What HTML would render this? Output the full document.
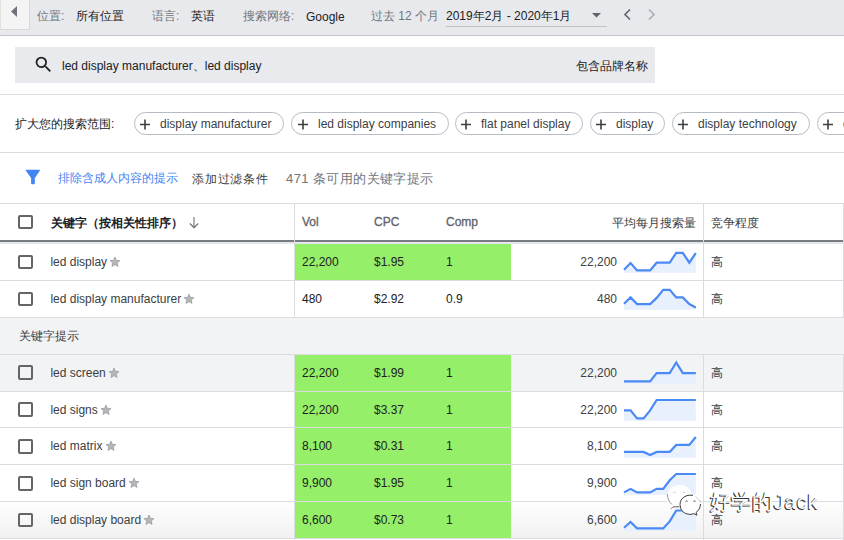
<!DOCTYPE html>
<html><head><meta charset="utf-8">
<style>
*{box-sizing:border-box;margin:0;padding:0}
html,body{width:844px;height:540px;overflow:hidden;background:#fff}
body{position:relative;font-family:"Liberation Sans",sans-serif;font-size:12px;color:#3c4043}
.a{position:absolute;white-space:nowrap}
.t{position:absolute;white-space:nowrap;line-height:14px}
.topbar{left:0;top:0;width:844px;height:35px;background:#e8e9ed;border-bottom:1px solid #c4c5c8;height:36px}
.backbtn{left:0;top:0;width:30px;height:30px;background:#f4f4f5;border-right:1px solid #d9d9db;border-bottom:1px solid #d9d9db;border-left:1px solid #e0e0e0}
.lbl{color:#70757a}
.val{color:#202124}
.search{left:15px;top:47px;width:640px;height:36px;background:#e8eaed}
.hline{position:absolute;left:0;width:844px;height:1px;background:#dadce0}
.chip{position:absolute;top:112px;height:23px;border:1px solid #b7bcc4;border-radius:12px;background:#fff}
.chip .pl{position:absolute;left:5px;top:5.5px}
.chip .pl:before{content:"";position:absolute;left:0;top:4.25px;width:10px;height:1.5px;background:#3c4043}
.chip .pl:after{content:"";position:absolute;left:4.25px;top:0;width:1.5px;height:10px;background:#3c4043}
.chip span{position:absolute;top:4px;line-height:14px;color:#3c4043}
.cb{position:absolute;left:18px;width:15px;height:14px;border:2px solid #646566;border-radius:2px}
.row{position:absolute;left:0;width:844px}
.green{position:absolute;left:295px;width:216px;background:#95ef68}
.st{position:relative;top:1.5px;margin-left:2.2px}
</style></head><body>

<!-- top bar -->
<div class="a topbar"></div>
<div class="a backbtn"><svg width="30" height="30" style="position:absolute;left:-1px;top:0"><path d="M17 6 L11 11.5 L17 17 Z" fill="#70747a"/></svg></div>
<div class="t lbl" style="left:37px;top:9px">位置:</div>
<div class="t val" style="left:76px;top:9px">所有位置</div>
<div class="t lbl" style="left:152px;top:9px">语言:</div>
<div class="t val" style="left:191px;top:9px">英语</div>
<div class="t lbl" style="left:243px;top:9px">搜索网络:</div>
<div class="t val" style="left:306px;top:10px">Google</div>
<div class="t lbl" style="left:371px;top:9px">过去 12 个月</div>
<div class="t val" style="left:446px;top:9px">2019年2月 - 2020年1月</div>
<div class="a" style="left:446px;top:26px;width:161px;height:1px;background:#c0c2c6"></div>
<svg class="a" style="left:590px;top:12px" width="14" height="8"><path d="M2 1 L11 1 L6.5 5.5 Z" fill="#5f6368"/></svg>
<svg class="a" style="left:620px;top:6px" width="14" height="16"><path d="M10 3.5 L5 8.5 L10 13.5" fill="none" stroke="#5f6368" stroke-width="1.6"/></svg>
<svg class="a" style="left:644px;top:6px" width="14" height="16"><path d="M5 3.5 L10 8.5 L5 13.5" fill="none" stroke="#a9acb1" stroke-width="1.6"/></svg>

<!-- search -->
<div class="a search"></div>
<svg class="a" style="left:33px;top:53.5px" width="21" height="21" viewBox="0 0 24 24"><path fill="#202124" d="M15.5 14h-.79l-.28-.27A6.471 6.471 0 0 0 16 9.5 6.5 6.5 0 1 0 9.5 16c1.61 0 3.09-.59 4.23-1.57l.27.28v.79l5 4.99L20.49 19l-4.99-5zm-6 0C7.01 14 5 11.99 5 9.5S7.01 5 9.5 5 14 7.01 14 9.5 11.99 14 9.5 14z"/></svg>
<div class="t val" style="left:62px;top:59px;color:#202124">led display manufacturer、led display</div>
<div class="t val" style="left:576px;top:59px;color:#202124">包含品牌名称</div>
<div class="hline" style="top:94px"></div>

<!-- chips -->
<div class="t val" style="left:15px;top:117px;color:#202124">扩大您的搜索范围:</div>
<div class="chip" style="left:134px;width:150px"><svg class="pl" width="12" height="12"><path d="M0 5.5 H10 M5 0.5 V10.5" stroke="#3c4043" stroke-width="1.6" fill="none"/></svg><span style="left:25px">display manufacturer</span></div>
<div class="chip" style="left:291px;width:158px"><svg class="pl" width="12" height="12" style="left:6px"><path d="M0 5.5 H10 M5 0.5 V10.5" stroke="#3c4043" stroke-width="1.6" fill="none"/></svg><span style="left:26px">led display companies</span></div>
<div class="chip" style="left:455px;width:128px"><svg class="pl" width="12" height="12"><path d="M0 5.5 H10 M5 0.5 V10.5" stroke="#3c4043" stroke-width="1.6" fill="none"/></svg><span style="left:25px">flat panel display</span></div>
<div class="chip" style="left:590px;width:75px"><svg class="pl" width="12" height="12"><path d="M0 5.5 H10 M5 0.5 V10.5" stroke="#3c4043" stroke-width="1.6" fill="none"/></svg><span style="left:25px">display</span></div>
<div class="chip" style="left:672px;width:138px"><svg class="pl" width="12" height="12"><path d="M0 5.5 H10 M5 0.5 V10.5" stroke="#3c4043" stroke-width="1.6" fill="none"/></svg><span style="left:25px">display technology</span></div>
<div class="chip" style="left:817px;width:60px"><svg class="pl" width="12" height="12"><path d="M0 5.5 H10 M5 0.5 V10.5" stroke="#3c4043" stroke-width="1.6" fill="none"/></svg><span style="left:25px">display</span></div>
<div class="hline" style="top:152px"></div>

<!-- filter row -->
<svg class="a" style="left:20px;top:165px" width="26" height="25" viewBox="20 165 26 25"><path d="M26.3 169.8 H39.4 Q40.3 169.8 39.8 170.7 L34.8 178 V183.6 Q34.8 184.3 34.1 184.3 H31.8 Q31.1 184.3 31.1 183.6 V178 L25.9 170.7 Q25.4 169.8 26.3 169.8 Z" fill="#4285f4"/></svg>
<div class="t" style="left:58px;top:171px;color:#4285f4">排除含成人内容的提示</div>
<div class="t" style="left:192px;top:172px;color:#3c4043;font-size:12px;letter-spacing:0.8px">添加过滤条件</div>
<div class="t" style="left:286px;top:172px;color:#70757a;font-size:13px;letter-spacing:0.4px">471 条可用的关键字提示</div>
<div class="hline" style="top:203px"></div>

<!-- table -->
<div class="a" style="left:0;top:318px;width:844px;height:36px;background:#f1f3f4"></div>
<div class="a" style="left:0;top:355px;width:844px;height:36px;background:#f1f3f4"></div>
<div class="a" style="left:0;top:502px;width:844px;height:36px;background:linear-gradient(#fefefe,#f1f1f1)"></div>
<div class="green" style="top:244px;height:36px"></div>
<div class="green" style="top:355px;height:183px"></div>
<div class="hline" style="top:280px"></div>
<div class="hline" style="top:317px"></div>
<div class="hline" style="top:354px"></div>
<div class="hline" style="top:391px"></div>
<div class="hline" style="top:427px"></div>
<div class="hline" style="top:464px"></div>
<div class="hline" style="top:501px"></div>
<div class="hline" style="top:538px"></div>
<div class="a" style="left:0;top:240px;width:844px;height:2px;background:#777c84"></div>
<div class="a" style="left:0;top:242px;width:844px;height:2px;background:#e6e6ec"></div>
<div class="a" style="left:294px;top:204px;width:1px;height:114px;background:#dadce0"></div>
<div class="a" style="left:294px;top:355px;width:1px;height:185px;background:#dadce0"></div>
<div class="a" style="left:703px;top:204px;width:1px;height:114px;background:#dadce0"></div>
<div class="a" style="left:703px;top:355px;width:1px;height:185px;background:#dadce0"></div>
<div class="a" style="left:843px;top:204px;width:1px;height:114px;background:#dadce0"></div>
<div class="a" style="left:843px;top:355px;width:1px;height:185px;background:#dadce0"></div>
<div class="cb" style="top:215px"></div>
<div class="t" style="left:51px;top:216px;font-weight:bold;color:#202124">关键字（按相关性排序）</div>
<svg class="a" style="left:188px;top:216px" width="12" height="13"><path d="M6 1 V11.5 M1.8 7.5 L6 11.7 L10.2 7.5" fill="none" stroke="#6f7378" stroke-width="1.1"/></svg>
<div class="t" style="left:302px;top:215px;color:#5f6368;-webkit-text-stroke:0.3px #5f6368">Vol</div>
<div class="t" style="left:374px;top:215px;color:#5f6368;-webkit-text-stroke:0.3px #5f6368">CPC</div>
<div class="t" style="left:446px;top:215px;color:#5f6368;-webkit-text-stroke:0.3px #5f6368">Comp</div>
<div class="t" style="left:596px;top:216px;width:100px;text-align:right;color:#3c4043">平均每月搜索量</div>
<div class="t" style="left:711px;top:216px;color:#3c4043">竞争程度</div>
<div class="t" style="left:18.5px;top:329px;color:#3c4043">关键字提示</div>
<div class="cb" style="top:255px"></div>
<div class="t kw" style="left:50.4px;top:254px">led display<svg class="st" width="12" height="12" viewBox="0 0 24 24"><path d="M12 17.27L18.18 21l-1.64-7.03L22 9.24l-7.19-.61L12 2 9.19 8.63 2 9.24l5.46 4.73L5.82 21z" fill="#b4b6b9" stroke="#8d9096" stroke-width="1.2" stroke-linejoin="round"/></svg></div>
<div class="t" style="left:302px;top:255px;color:#202124">22,200</div>
<div class="t" style="left:374px;top:255px;color:#202124">$1.95</div>
<div class="t" style="left:446px;top:255px;color:#202124">1</div>
<div class="t" style="left:517px;top:255px;width:100px;text-align:right;color:#3c4043">22,200</div>
<div class="t" style="left:711px;top:255px;color:#3c4043">高</div>
<div class="cb" style="top:292px"></div>
<div class="t kw" style="left:50.4px;top:291px">led display manufacturer<svg class="st" width="12" height="12" viewBox="0 0 24 24"><path d="M12 17.27L18.18 21l-1.64-7.03L22 9.24l-7.19-.61L12 2 9.19 8.63 2 9.24l5.46 4.73L5.82 21z" fill="#b4b6b9" stroke="#8d9096" stroke-width="1.2" stroke-linejoin="round"/></svg></div>
<div class="t" style="left:302px;top:292px;color:#202124">480</div>
<div class="t" style="left:374px;top:292px;color:#202124">$2.92</div>
<div class="t" style="left:446px;top:292px;color:#202124">0.9</div>
<div class="t" style="left:517px;top:292px;width:100px;text-align:right;color:#3c4043">480</div>
<div class="t" style="left:711px;top:292px;color:#3c4043">高</div>
<div class="cb" style="top:365px;height:15px"></div>
<div class="t kw" style="left:50.4px;top:365px">led screen<svg class="st" width="12" height="12" viewBox="0 0 24 24"><path d="M12 17.27L18.18 21l-1.64-7.03L22 9.24l-7.19-.61L12 2 9.19 8.63 2 9.24l5.46 4.73L5.82 21z" fill="#b4b6b9" stroke="#8d9096" stroke-width="1.2" stroke-linejoin="round"/></svg></div>
<div class="t" style="left:302px;top:366px;color:#202124">22,200</div>
<div class="t" style="left:374px;top:366px;color:#202124">$1.99</div>
<div class="t" style="left:446px;top:366px;color:#202124">1</div>
<div class="t" style="left:517px;top:366px;width:100px;text-align:right;color:#3c4043">22,200</div>
<div class="t" style="left:711px;top:366px;color:#3c4043">高</div>
<div class="cb" style="top:402px;height:15px"></div>
<div class="t kw" style="left:50.4px;top:402px">led signs<svg class="st" width="12" height="12" viewBox="0 0 24 24"><path d="M12 17.27L18.18 21l-1.64-7.03L22 9.24l-7.19-.61L12 2 9.19 8.63 2 9.24l5.46 4.73L5.82 21z" fill="#b4b6b9" stroke="#8d9096" stroke-width="1.2" stroke-linejoin="round"/></svg></div>
<div class="t" style="left:302px;top:403px;color:#202124">22,200</div>
<div class="t" style="left:374px;top:403px;color:#202124">$3.37</div>
<div class="t" style="left:446px;top:403px;color:#202124">1</div>
<div class="t" style="left:517px;top:403px;width:100px;text-align:right;color:#3c4043">22,200</div>
<div class="t" style="left:711px;top:403px;color:#3c4043">高</div>
<div class="cb" style="top:439px;height:15px"></div>
<div class="t kw" style="left:50.4px;top:438px">led matrix<svg class="st" width="12" height="12" viewBox="0 0 24 24"><path d="M12 17.27L18.18 21l-1.64-7.03L22 9.24l-7.19-.61L12 2 9.19 8.63 2 9.24l5.46 4.73L5.82 21z" fill="#b4b6b9" stroke="#8d9096" stroke-width="1.2" stroke-linejoin="round"/></svg></div>
<div class="t" style="left:302px;top:439px;color:#202124">8,100</div>
<div class="t" style="left:374px;top:439px;color:#202124">$0.31</div>
<div class="t" style="left:446px;top:439px;color:#202124">1</div>
<div class="t" style="left:517px;top:439px;width:100px;text-align:right;color:#3c4043">8,100</div>
<div class="t" style="left:711px;top:439px;color:#3c4043">高</div>
<div class="cb" style="top:476px;height:15px"></div>
<div class="t kw" style="left:50.4px;top:475px">led sign board<svg class="st" width="12" height="12" viewBox="0 0 24 24"><path d="M12 17.27L18.18 21l-1.64-7.03L22 9.24l-7.19-.61L12 2 9.19 8.63 2 9.24l5.46 4.73L5.82 21z" fill="#b4b6b9" stroke="#8d9096" stroke-width="1.2" stroke-linejoin="round"/></svg></div>
<div class="t" style="left:302px;top:476px;color:#202124">9,900</div>
<div class="t" style="left:374px;top:476px;color:#202124">$1.95</div>
<div class="t" style="left:446px;top:476px;color:#202124">1</div>
<div class="t" style="left:517px;top:476px;width:100px;text-align:right;color:#3c4043">9,900</div>
<div class="t" style="left:711px;top:476px;color:#3c4043">高</div>
<div class="cb" style="top:513px"></div>
<div class="t kw" style="left:50.4px;top:512px">led display board<svg class="st" width="12" height="12" viewBox="0 0 24 24"><path d="M12 17.27L18.18 21l-1.64-7.03L22 9.24l-7.19-.61L12 2 9.19 8.63 2 9.24l5.46 4.73L5.82 21z" fill="#b4b6b9" stroke="#8d9096" stroke-width="1.2" stroke-linejoin="round"/></svg></div>
<div class="t" style="left:302px;top:513px;color:#202124">6,600</div>
<div class="t" style="left:374px;top:513px;color:#202124">$0.73</div>
<div class="t" style="left:446px;top:513px;color:#202124">1</div>
<div class="t" style="left:517px;top:513px;width:100px;text-align:right;color:#3c4043">6,600</div>
<div class="t" style="left:711px;top:513px;color:#3c4043">高</div>
<svg class="a" style="left:0;top:0" width="844" height="540"><path d="M624.00,272.8 L624.00,269.7 L630.53,263.0 L637.06,270.4 L643.59,270.4 L650.12,270.4 L656.65,262.7 L663.18,262.7 L669.71,262.7 L676.24,252.8 L682.77,252.8 L689.30,262.7 L695.83,253.0 L695.83,272.8 Z" fill="#e8f0fe"/><polyline points="624.00,269.7 630.53,263.0 637.06,270.4 643.59,270.4 650.12,270.4 656.65,262.7 663.18,262.7 669.71,262.7 676.24,252.8 682.77,252.8 689.30,262.7 695.83,253.0" fill="none" stroke="#4a8af5" stroke-width="2.2" stroke-linejoin="miter"/><path d="M624.00,309.8 L624.00,303.7 L630.53,297.4 L637.06,304.1 L643.59,304.1 L650.12,304.1 L656.65,297.9 L663.18,289.8 L669.71,289.8 L676.24,297.4 L682.77,297.4 L689.30,304.1 L695.83,307.4 L695.83,309.8 Z" fill="#e8f0fe"/><polyline points="624.00,303.7 630.53,297.4 637.06,304.1 643.59,304.1 650.12,304.1 656.65,297.9 663.18,289.8 669.71,289.8 676.24,297.4 682.77,297.4 689.30,304.1 695.83,307.4" fill="none" stroke="#4a8af5" stroke-width="2.2" stroke-linejoin="miter"/><path d="M624.00,383.8 L624.00,381.4 L630.53,381.4 L637.06,381.4 L643.59,381.4 L650.12,381.4 L656.65,373.1 L663.18,373.1 L669.71,373.1 L676.24,362.5 L682.77,373.1 L689.30,373.1 L695.83,373.1 L695.83,383.8 Z" fill="#e8f0fe"/><polyline points="624.00,381.4 630.53,381.4 637.06,381.4 643.59,381.4 650.12,381.4 656.65,373.1 663.18,373.1 669.71,373.1 676.24,362.5 682.77,373.1 689.30,373.1 695.83,373.1" fill="none" stroke="#4a8af5" stroke-width="2.2" stroke-linejoin="miter"/><path d="M624.00,420.8 L624.00,410.4 L630.53,410.4 L637.06,418.4 L643.59,418.4 L650.12,410.4 L656.65,400.0 L663.18,400.0 L669.71,400.0 L676.24,400.0 L682.77,400.0 L689.30,400.0 L695.83,400.0 L695.83,420.8 Z" fill="#e8f0fe"/><polyline points="624.00,410.4 630.53,410.4 637.06,418.4 643.59,418.4 650.12,410.4 656.65,400.0 663.18,400.0 669.71,400.0 676.24,400.0 682.77,400.0 689.30,400.0 695.83,400.0" fill="none" stroke="#4a8af5" stroke-width="2.2" stroke-linejoin="miter"/><path d="M624.00,457.8 L624.00,451.9 L630.53,451.9 L637.06,451.9 L643.59,451.9 L650.12,455.1 L656.65,451.9 L663.18,451.9 L669.71,451.9 L676.24,444.9 L682.77,444.9 L689.30,444.9 L695.83,437.0 L695.83,457.8 Z" fill="#e8f0fe"/><polyline points="624.00,451.9 630.53,451.9 637.06,451.9 643.59,451.9 650.12,455.1 656.65,451.9 663.18,451.9 669.71,451.9 676.24,444.9 682.77,444.9 689.30,444.9 695.83,437.0" fill="none" stroke="#4a8af5" stroke-width="2.2" stroke-linejoin="miter"/><path d="M624.00,494.8 L624.00,492.4 L630.53,488.9 L637.06,492.4 L643.59,492.4 L650.12,492.4 L656.65,488.9 L663.18,488.9 L669.71,480.3 L676.24,474.0 L682.77,474.0 L689.30,474.0 L695.83,474.0 L695.83,494.8 Z" fill="#e8f0fe"/><polyline points="624.00,492.4 630.53,488.9 637.06,492.4 643.59,492.4 650.12,492.4 656.65,488.9 663.18,488.9 669.71,480.3 676.24,474.0 682.77,474.0 689.30,474.0 695.83,474.0" fill="none" stroke="#4a8af5" stroke-width="2.2" stroke-linejoin="miter"/><path d="M624.00,530.8 L624.00,527.7 L630.53,521.9 L637.06,528.4 L643.59,528.4 L650.12,528.4 L656.65,528.4 L663.18,528.4 L669.71,521.4 L676.24,510.5 L682.77,510.5 L689.30,510.5 L695.83,510.5 L695.83,530.8 Z" fill="#e8f0fe"/><polyline points="624.00,527.7 630.53,521.9 637.06,528.4 643.59,528.4 650.12,528.4 656.65,528.4 663.18,528.4 669.71,521.4 676.24,510.5 682.77,510.5 689.30,510.5 695.83,510.5" fill="none" stroke="#4a8af5" stroke-width="2.2" stroke-linejoin="miter"/></svg>
<!-- watermark -->
<svg class="a" style="left:660px;top:480px" width="50" height="42" viewBox="660 480 50 42">
 <path d="M670 505.5 Q666 501 667 494.5 Q669.5 485.5 679 485 Q689 485 691 493 L691 495 Q682 495 680 501 Q679 504 680 506.5 L674 506.5 L671.5 509 Z" fill="#fff" fill-opacity="0.93"/>
 <path d="M672 504.5 Q667.5 500.5 667.3 494" fill="none" stroke="#555" stroke-width="0.8" stroke-opacity="0.75"/>
 <path d="M671 508.8 L673 506.8 L679.5 506.8" fill="none" stroke="#333" stroke-width="0.9" stroke-opacity="0.85"/>
 <path d="M673.6 492.8 L674.5 491.9 L675.4 492.8 M683.1 492.8 L684 491.9 L684.9 492.8" fill="none" stroke="#888" stroke-width="0.6"/>
 <path d="M680 504.5 Q680 495 690 495 Q699.5 495 700.5 503.5 Q700.5 509.5 696 512.5 L697 515.2 L693.8 513.6 Q692 514.4 690 514.4 Q680 514 680 504.5 Z" fill="#fff" fill-opacity="0.96"/>
 <path d="M693 495.4 Q690 494.8 687 495.6 Q680 498 680 504.5 Q680.5 514 690 514.4 Q692 514.4 693.8 513.6 L697 515.2 L696 512.5 Q700.3 509.5 700.5 504" fill="none" stroke="#2a2a2a" stroke-width="0.9"/>
 <path d="M695.5 496.5 Q699.5 499 700.4 502.5" fill="none" stroke="#777" stroke-width="0.6" stroke-opacity="0.6"/>
 <path d="M685.6 501.8 L686.5 500.6 L687.4 501.8 M693.6 501.8 L694.5 500.6 L695.4 501.8" fill="none" stroke="#333" stroke-width="0.8"/>
</svg>
<div class="a" style="left:709.5px;top:489px;font-size:21px;line-height:26px;letter-spacing:0.4px;color:#fff;text-shadow:-1px 1px 0.5px #333, -1px 0 0.5px #666">好学的Jack</div>

</body></html>
